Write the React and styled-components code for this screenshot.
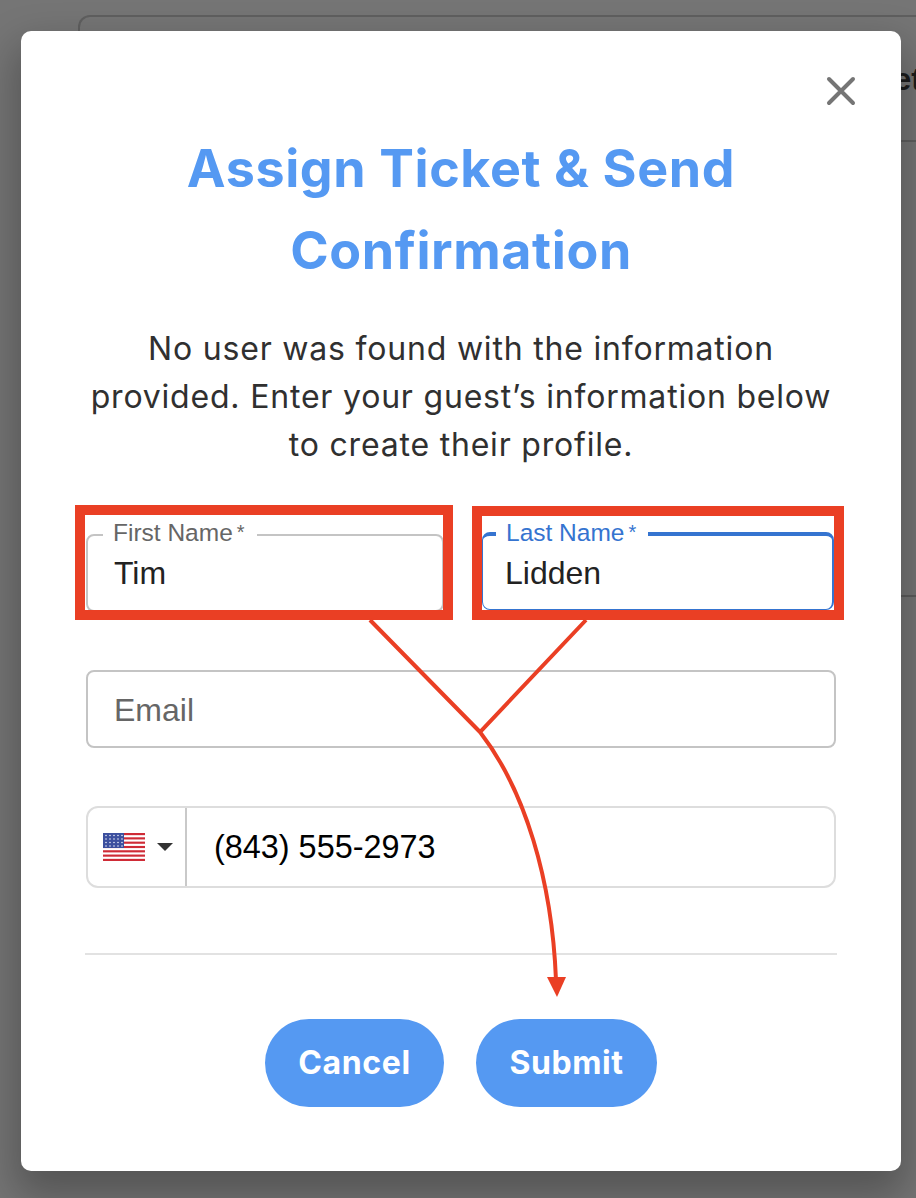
import React from 'react';
import styled, { createGlobalStyle } from 'styled-components';

const GlobalStyle = createGlobalStyle`
  html, body {
    margin: 0;
    padding: 0;
  }
  body {
    font-family: 'Liberation Sans', Arial, sans-serif;
  }
`;

const Page = styled.div`
  position: relative;
  width: 916px;
  height: 1198px;
  overflow: hidden;
  background: #757575;
  padding: 15px 0 0 78px;
  box-sizing: border-box;
`;

const BehindCard = styled.div`
  width: 900px;
  height: 582px;
  border: 2px solid #5f5f5f;
  border-bottom-color: #5c5c5c;
  border-radius: 12px 0 0 0;
  box-sizing: border-box;
`;

const BehindHeader = styled.div`
  height: 125px;
  padding: 44px 0 0 750px;
  box-sizing: border-box;
  border-bottom: 2px solid #5f5f5f;
  font-size: 32px;
  font-weight: 700;
  color: #1c1c1c;
  white-space: nowrap;
`;

const Overlay = styled.div`
  position: absolute;
  inset: 0;
  padding: 31px 15px 27px 21px;
  box-sizing: border-box;
  display: flex;
`;

const Modal = styled.div`
  position: relative;
  flex: 1;
  background: #fff;
  border-radius: 10px;
  padding: 97px 65px 0;
  box-sizing: border-box;
  box-shadow: 0 20px 40px 6px rgba(0, 0, 0, 0.28);
`;

const CloseButton = styled.button`
  position: absolute;
  top: 44px;
  right: 44px;
  width: 32px;
  height: 32px;
  padding: 0;
  border: none;
  background: none;
  svg {
    display: block;
  }
`;

const Title = styled.h1`
  margin: 0 0 33px;
  font-family: Inter, sans-serif;
  font-weight: 700;
  font-size: 52px;
  letter-spacing: 0.6px;
  line-height: 82px;
  text-align: center;
  color: #5599f2;
`;

const Intro = styled.p`
  margin: 0 -10px 65px;
  font-family: Inter, sans-serif;
  font-weight: 400;
  font-size: 32px;
  letter-spacing: 0.8px;
  line-height: 48px;
  text-align: center;
  color: #303030;
`;

const NameRow = styled.div`
  display: grid;
  grid-template-columns: 358px 352px;
  column-gap: 38px;
  margin-bottom: 58px;
`;

const Field = styled.div`
  position: relative;
  height: 78px;
  padding: 2px 26px 0;
  display: flex;
  align-items: center;
  box-sizing: border-box;
  border: 2px solid #c4c4c4;
  border-radius: 8px;
  font-size: 32px;
  color: ${(p) => (p.$muted ? '#666' : '#222')};
`;

const NameField = styled(Field)`
  padding-top: 0;
`;

const FocusedField = styled(NameField)`
  margin-top: -2px;
  padding: 1px 22px 0;
  border-color: #3574d0;
  border-top-width: 4px;
  border-left-width: 1px;
  border-bottom-width: 1px;
  height: 78px;
`;

const FieldLabel = styled.span`
  position: absolute;
  top: -17px;
  left: ${(p) => (p.$focused ? 13 : 15)}px;
  padding: 0 12px 0 10px;
  background: #fff;
  font-size: 24.5px;
  line-height: 28px;
  color: ${(p) => (p.$focused ? '#3574d0' : '#666')};
  white-space: nowrap;
  sup {
    font-size: 20px;
    line-height: 0;
    margin-left: 4px;
    vertical-align: 2px;
  }
`;

const Highlight = styled.span`
  position: absolute;
  top: ${(p) => (p.$focused ? -30 : -31)}px;
  left: ${(p) => (p.$focused ? -11 : -13)}px;
  right: ${(p) => (p.$focused ? -12 : -11)}px;
  bottom: ${(p) => (p.$focused ? -11 : -10)}px;
  border: 10px solid #ea3f24;
  pointer-events: none;
`;

const EmailField = styled(Field)`
  margin-bottom: 58px;
`;

const PhoneField = styled.div`
  display: flex;
  height: 82px;
  box-sizing: border-box;
  border: 2px solid #ddd;
  border-radius: 12px;
`;

const CountryPicker = styled.div`
  width: 99px;
  display: flex;
  align-items: center;
  gap: 12px;
  padding-left: 15px;
  box-sizing: border-box;
  border-right: 2px solid #c9c9c9;
`;

const Caret = styled.span`
  width: 0;
  height: 0;
  border-left: 8px solid transparent;
  border-right: 8px solid transparent;
  border-top: 8px solid #333;
`;

const PhoneNumber = styled.div`
  display: flex;
  align-items: center;
  padding-left: 27px;
  font-size: 32.4px;
  color: #000;
`;

const Divider = styled.hr`
  height: 2px;
  border: none;
  margin: 65px -1px 64px;
  background: #e2e2e2;
`;

const Actions = styled.div`
  display: flex;
  justify-content: center;
  gap: 32px;
`;

const ActionButton = styled.button`
  width: ${(p) => p.$width}px;
  height: 88px;
  padding: 0 0 2px;
  border: none;
  border-radius: 44px;
  background: #5599f2;
  color: #fff;
  font-family: Inter, sans-serif;
  font-weight: 700;
  font-size: 32px;
  letter-spacing: 0.6px;
`;

const Annotation = styled.svg`
  position: absolute;
  left: 0;
  top: 0;
  pointer-events: none;
`;

const stripes = [0, 2, 4, 6, 8, 10, 12];

const UsFlag = () => (
  <svg width="42" height="28" viewBox="0 0 42 28">
    <rect width="42" height="28" fill="#fff" />
    {stripes.map((n) => (
      <rect key={n} y={n * 2.154} width="42" height="2.154" fill="#cf2b36" />
    ))}
    <rect width="21" height="15" fill="#3c4f9e" />
    {[2.5, 6, 9.5, 13].map((y) =>
      [3, 7, 11, 15, 19].map((x) => (
        <circle key={`${x}-${y}`} cx={x} cy={y} r="0.8" fill="#e6e9f5" />
      ))
    )}
  </svg>
);

const App = () => (
  <Page>
    <GlobalStyle />
    <BehindCard>
      <BehindHeader>Ticket</BehindHeader>
    </BehindCard>
    <Overlay>
      <Modal>
        <CloseButton aria-label="Close">
          <svg width="32" height="32" viewBox="0 0 32 32">
            <path
              d="M4 4 L28 28 M28 4 L4 28"
              stroke="#757575"
              strokeWidth="4"
              strokeLinecap="round"
            />
          </svg>
        </CloseButton>
        <Title>
          Assign Ticket &amp; Send
          <br />
          Confirmation
        </Title>
        <Intro>
          No user was found with the information
          <br />
          provided. Enter your guest’s information below
          <br />
          to create their profile.
        </Intro>
        <NameRow>
          <NameField>
            <FieldLabel>
              First Name<sup>*</sup>
            </FieldLabel>
            Tim
            <Highlight />
          </NameField>
          <FocusedField>
            <FieldLabel $focused>
              Last Name<sup>*</sup>
            </FieldLabel>
            Lidden
            <Highlight $focused />
          </FocusedField>
        </NameRow>
        <EmailField $muted>Email</EmailField>
        <PhoneField>
          <CountryPicker>
            <UsFlag />
            <Caret />
          </CountryPicker>
          <PhoneNumber>(843) 555-2973</PhoneNumber>
        </PhoneField>
        <Divider />
        <Actions>
          <ActionButton $width={179}>Cancel</ActionButton>
          <ActionButton $width={181}>Submit</ActionButton>
        </Actions>
      </Modal>
    </Overlay>
    <Annotation width="916" height="1198" viewBox="0 0 916 1198">
      <path
        d="M370 620 L480 732 L586 620 M480 732 C525 790 552 880 556 980"
        fill="none"
        stroke="#ea3f24"
        strokeWidth="4"
      />
      <path d="M547 977 L566 977 L557 997 Z" fill="#ea3f24" />
    </Annotation>
  </Page>
);

export default App;
